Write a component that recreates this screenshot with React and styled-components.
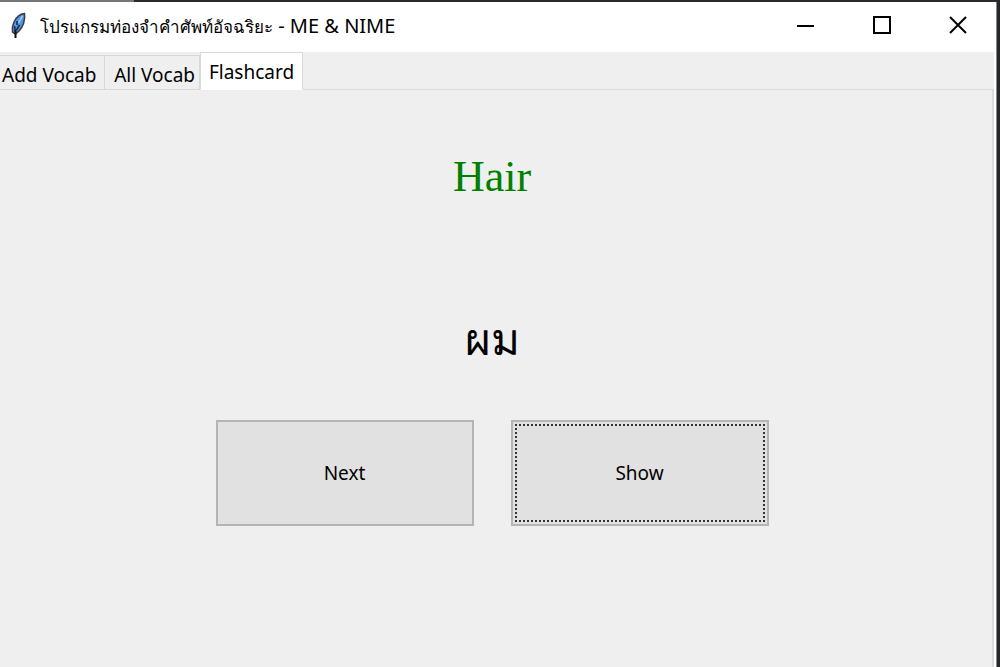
import React, { useState } from "react";
import styled, { createGlobalStyle } from "styled-components";

const GlobalStyle = createGlobalStyle`
  * { box-sizing: border-box; }
  body {
    margin: 0;
    background: #25282b;
    color: #000;
    font-family: "Noto Sans", "Open Sans", sans-serif;
    font-size: 19px;
    line-height: 28px;
  }
  button { font: inherit; color: inherit; }
`;

const Desktop = styled.div`
  display: flex;
  flex-direction: column;
  min-height: 100vh;
  padding-right: 3px;
  background: #25282b;
`;

const Backdrop = styled.div`
  height: 2px;
  background: linear-gradient(to right, #777 134px, #2b2b2b 134px);
`;

const Window = styled.div`
  flex: 1;
  display: flex;
  flex-direction: column;
  background: #fff;
  border-right: 1px solid #8a8a8a;
`;

const TitleBar = styled.header`
  display: flex;
  align-items: center;
  height: 50px;
  padding: 0 0 2px 8px;
`;

const Title = styled.h1`
  flex: 1;
  margin: 0 0 0 12px;
  font-size: 20px;
  font-weight: 400;
  white-space: nowrap;
`;

const ThaiText = styled.span`
  font-size: ${(p) => p.$size}px;
`;

const WindowControl = styled.button`
  display: flex;
  align-items: center;
  justify-content: center;
  width: 76px;
  height: 46px;
  padding: 0 0 2px;
  border: 0;
  background: transparent;
`;

const Client = styled.main`
  flex: 1;
  display: flex;
  flex-direction: column;
  margin-right: 2px;
  background: #efefef;
`;

const TabList = styled.div`
  display: flex;
  align-items: flex-end;
  height: 38px;
  margin-bottom: -1px;
`;

const Tab = styled.button`
  height: ${(p) => (p.$selected ? 38 : 35)}px;
  width: ${(p) => p.$width}px;
  padding: ${(p) => (p.$selected ? "2px 0 0" : "4px 4px 0 2px")};
  text-align: ${(p) => p.$align};
  border: 1px solid #d9d9d9;
  border-left-width: ${(p) => (p.$selected ? 1 : 0)}px;
  border-bottom-color: ${(p) => (p.$selected ? "#fff" : "#d9d9d9")};
  background: ${(p) => (p.$selected ? "#fff" : "#efefef")};
  white-space: nowrap;
  z-index: 1;
`;

const Panel = styled.section`
  flex: 1;
  display: flex;
  flex-direction: column;
  align-items: center;
  padding: 60px 8px 0 0;
  border: 2px solid #dcdcdc;
  border-width: 1px 2px 0 0;
`;

const Word = styled.p`
  margin: 0;
  height: 56px;
  color: #008000;
  font-family: "Liberation Serif", serif;
  font-size: 44px;
  line-height: 54px;
`;

const Meaning = styled.p`
  margin: 104px 0 0;
  height: 56px;
  line-height: 56px;
`;

const Actions = styled.div`
  display: flex;
  gap: 37px;
  margin-top: 54px;
`;

const ActionButton = styled.button`
  width: 258px;
  height: 106px;
  padding: 2px;
  border: 2px solid #b4b4b4;
  background: #e1e1e1;
`;

const FocusRing = styled.span`
  display: flex;
  align-items: center;
  justify-content: center;
  height: 100%;
  border: 2px dotted ${(p) => (p.$on ? "#333" : "transparent")};
`;

const Feather = () => (
  <svg width="20" height="28" viewBox="0 0 20 28" aria-hidden="true">
    <path d="M16.500 1.500C12 2 8 5.500 6 10C4.500 13 4 16 4.500 20L7.500 22L11 19C15 15 17.500 8 16.500 1.500z" fill="#4f97e8" stroke="#3a3a3a" strokeWidth="1.500" />
    <path d="M14.500 4L10.500 11" fill="none" stroke="#a9d0f7" strokeWidth="1.500" />
    <path d="M9 9v4M6.500 14l1 6M11.500 13l-3 5" fill="none" stroke="#17243d" strokeWidth="1.500" />
    <path d="M7.500 18v8" fill="none" stroke="#111" strokeWidth="2" />
  </svg>
);

const tabs = [
  { label: "Add Vocab", width: 105, align: "left" },
  { label: "All Vocab", width: 95, align: "right" },
  { label: "Flashcard", width: 103, align: "center" },
];

export default function App() {
  const [tab, setTab] = useState("Flashcard");
  const [shown, setShown] = useState(true);
  const [focused, setFocused] = useState("Show");

  return (
    <>
      <GlobalStyle />
      <Desktop>
        <Backdrop />
        <Window>
          <TitleBar>
            <Feather />
            <Title>
              <ThaiText $size={17}>โปรแกรมท่องจำคำศัพท์อัจฉริยะ</ThaiText> - ME &amp; NIME
            </Title>
            <WindowControl aria-label="Minimize">
              <svg width="18" height="18" viewBox="0 0 18 18">
                <path d="M0 10h17" stroke="#000" strokeWidth="2" />
              </svg>
            </WindowControl>
            <WindowControl aria-label="Maximize">
              <svg width="18" height="18" viewBox="0 0 18 18">
                <path d="M1 1h16v16H1z" fill="none" stroke="#000" strokeWidth="2" />
              </svg>
            </WindowControl>
            <WindowControl aria-label="Close">
              <svg width="18" height="18" viewBox="0 0 18 18">
                <path d="M1 1l16 16M17 1L1 17" stroke="#000" strokeWidth="2" />
              </svg>
            </WindowControl>
          </TitleBar>
          <Client>
            <TabList role="tablist">
              {tabs.map(({ label, width, align }) => (
                <Tab
                  key={label}
                  role="tab"
                  aria-selected={tab === label}
                  $selected={tab === label}
                  $width={width}
                  $align={align}
                  onClick={() => setTab(label)}
                >
                  {label}
                </Tab>
              ))}
            </TabList>
            <Panel role="tabpanel" aria-label={tab}>
              <Word>Hair</Word>
              <Meaning>{shown && <ThaiText $size={44}>ผม</ThaiText>}</Meaning>
              <Actions>
                <ActionButton
                  onClick={() => {
                    setShown(false);
                    setFocused("Next");
                  }}
                >
                  <FocusRing $on={focused === "Next"}>Next</FocusRing>
                </ActionButton>
                <ActionButton
                  onClick={() => {
                    setShown(true);
                    setFocused("Show");
                  }}
                >
                  <FocusRing $on={focused === "Show"}>Show</FocusRing>
                </ActionButton>
              </Actions>
            </Panel>
          </Client>
        </Window>
      </Desktop>
    </>
  );
}
